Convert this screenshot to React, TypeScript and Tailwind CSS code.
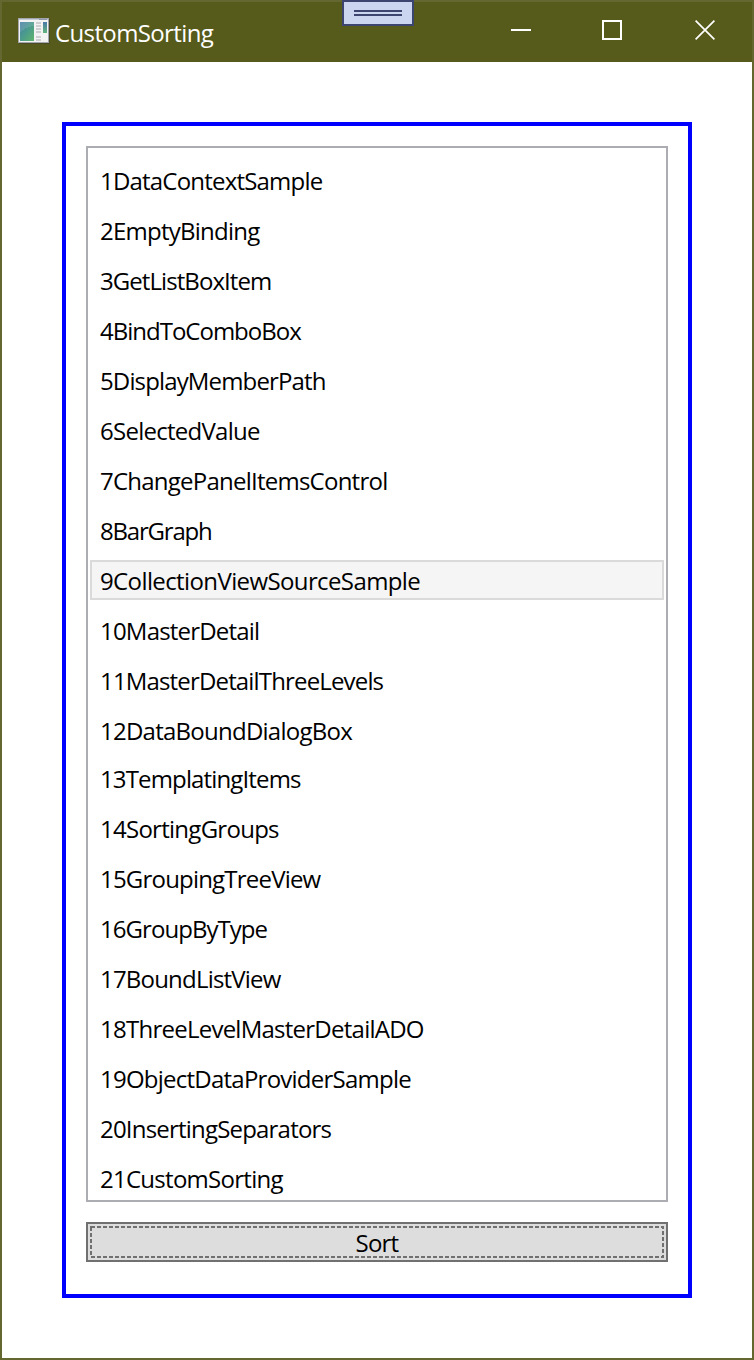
type Item = { label: string; tracking: string; selected?: boolean; tight?: boolean };

const items: Item[] = [
  { label: '1DataContextSample', tracking: 'tracking-[-0.8px]' },
  { label: '2EmptyBinding', tracking: 'tracking-[-0.75px]' },
  { label: '3GetListBoxItem', tracking: 'tracking-[-0.93px]' },
  { label: '4BindToComboBox', tracking: 'tracking-[-1px]' },
  { label: '5DisplayMemberPath', tracking: 'tracking-[-0.86px]' },
  { label: '6SelectedValue', tracking: 'tracking-[-0.73px]' },
  { label: '7ChangePanelItemsControl', tracking: 'tracking-[-0.76px]' },
  { label: '8BarGraph', tracking: 'tracking-[-1.2px]' },
  { label: '9CollectionViewSourceSample', tracking: 'tracking-[-0.61px]', selected: true },
  { label: '10MasterDetail', tracking: 'tracking-[-0.8px]' },
  { label: '11MasterDetailThreeLevels', tracking: 'tracking-[-0.84px]' },
  { label: '12DataBoundDialogBox', tracking: 'tracking-[-0.75px]' },
  { label: '13TemplatingItems', tracking: 'tracking-[-0.86px]', tight: true },
  { label: '14SortingGroups', tracking: 'tracking-[-0.73px]' },
  { label: '15GroupingTreeView', tracking: 'tracking-[-0.8px]' },
  { label: '16GroupByType', tracking: 'tracking-[-0.95px]' },
  { label: '17BoundListView', tracking: 'tracking-[-0.8px]' },
  { label: '18ThreeLevelMasterDetailADO', tracking: 'tracking-[-0.75px]' },
  { label: '19ObjectDataProviderSample', tracking: 'tracking-[-0.76px]' },
  { label: '20InsertingSeparators', tracking: 'tracking-[-0.8px]' },
  { label: '21CustomSorting', tracking: 'tracking-[-0.73px]' },
];

function AppIcon() {
  return (
    <svg width="32" height="28" viewBox="0 0 32 28" shapeRendering="crispEdges">
      <defs>
        <linearGradient id="pane" x1="0" y1="0" x2="1" y2="1">
          <stop offset="0" stopColor="#4a7fa8" />
          <stop offset="0.5" stopColor="#4b9c8c" />
          <stop offset="1" stopColor="#62b56c" />
        </linearGradient>
        <linearGradient id="strip" x1="0" y1="0" x2="0" y2="1">
          <stop offset="0" stopColor="#4a78a8" />
          <stop offset="1" stopColor="#62b57c" />
        </linearGradient>
      </defs>
      <rect x="1" y="1" width="31" height="25" fill="#484b25" />
      <rect x="0" y="0" width="31" height="25" fill="#a3a7ad" />
      <rect x="1" y="1" width="29" height="23" fill="#f3f3f4" />
      <rect x="1" y="1" width="29" height="1" fill="#c8ccd6" />
      <rect x="21" y="1" width="8" height="1" fill="#9298ab" />
      <rect x="2" y="4" width="14" height="19" fill="url(#pane)" />
      <path d="M2 15 Q6 9 16 8 V4 H2Z" fill="#ffffff" opacity="0.12" />
      <path d="M18 5h5M18 8h5M18 11h5M18 14h5M18 19h5M18 22h5" stroke="#cdcfd1" strokeWidth="2" />
      <rect x="25" y="4" width="4" height="11" fill="url(#strip)" />
    </svg>
  );
}

export default function App() {
  return (
    <div className="relative flex h-[1360px] w-[754px] flex-col border-2 border-[#646830] bg-white font-['Open_Sans','Noto_Sans',sans-serif] text-[24px] text-black">
      <header className="flex h-[60px] shrink-0 items-start bg-[#565a1b] text-white">
        <div className="ml-4 mt-4">
          <AppIcon />
        </div>
        <h1 className="ml-[5px] mt-[11px] leading-[40px] tracking-[-0.62px]">CustomSorting</h1>
        <div className="ml-auto mr-[37px] mt-[18px] flex items-center">
          <button aria-label="Minimize" className="flex h-5 w-5 items-center">
            <span className="h-0.5 w-full bg-white" />
          </button>
          <button aria-label="Maximize" className="ml-[71px] h-5 w-5 border-2 border-white" />
          <button aria-label="Close" className="ml-[73px] h-5 w-5">
            <svg width="20" height="20" viewBox="0 0 20 20">
              <path d="M.6 .6 19.4 19.4M19.4 .6 .6 19.4" stroke="#fff" strokeWidth="1.7" />
            </svg>
          </button>
        </div>
      </header>
      <div className="absolute -top-0.5 left-[340px] flex h-[26px] w-[72px] flex-col items-center gap-0.5 border-2 border-[#3b4570] bg-[#ccd5f0] pt-2">
        <span className="h-0.5 w-12 bg-[#3b4570]" />
        <span className="h-0.5 w-12 bg-[#3b4570]" />
      </div>
      <main className="mx-[60px] mt-[60px] flex h-[1176px] flex-col gap-5 border-4 border-[#0000ff] p-5">
        <ul className="flex h-[1056px] flex-col overflow-hidden border-2 border-[#abadb3] px-0.5 pt-0.5">
          {items.map((item) => (
            <li
              key={item.label}
              className={`flex h-10 shrink-0 items-center whitespace-nowrap border-2 pl-2 pt-0.5 ${item.tight ? 'mt-2' : 'mt-2.5'} ${
                item.selected ? 'border-[#dadada] bg-[#f5f5f5]' : 'border-transparent'
              }`}
            >
              <span className={`leading-[36px] ${item.tracking}`}>{item.label}</span>
            </li>
          ))}
        </ul>
        <button className="relative flex h-10 items-center justify-center border-2 border-[#707070] bg-[#dddddd] pt-0.5">
          <span className="tracking-[-0.8px]">Sort</span>
          <svg className="absolute left-0.5 top-0.5" width="574" height="32" viewBox="0 0 574 32" shapeRendering="crispEdges">
            <rect x="1" y="1" width="572" height="30" fill="none" stroke="#707070" strokeWidth="2" strokeDasharray="4 2" />
          </svg>
        </button>
      </main>
    </div>
  );
}
